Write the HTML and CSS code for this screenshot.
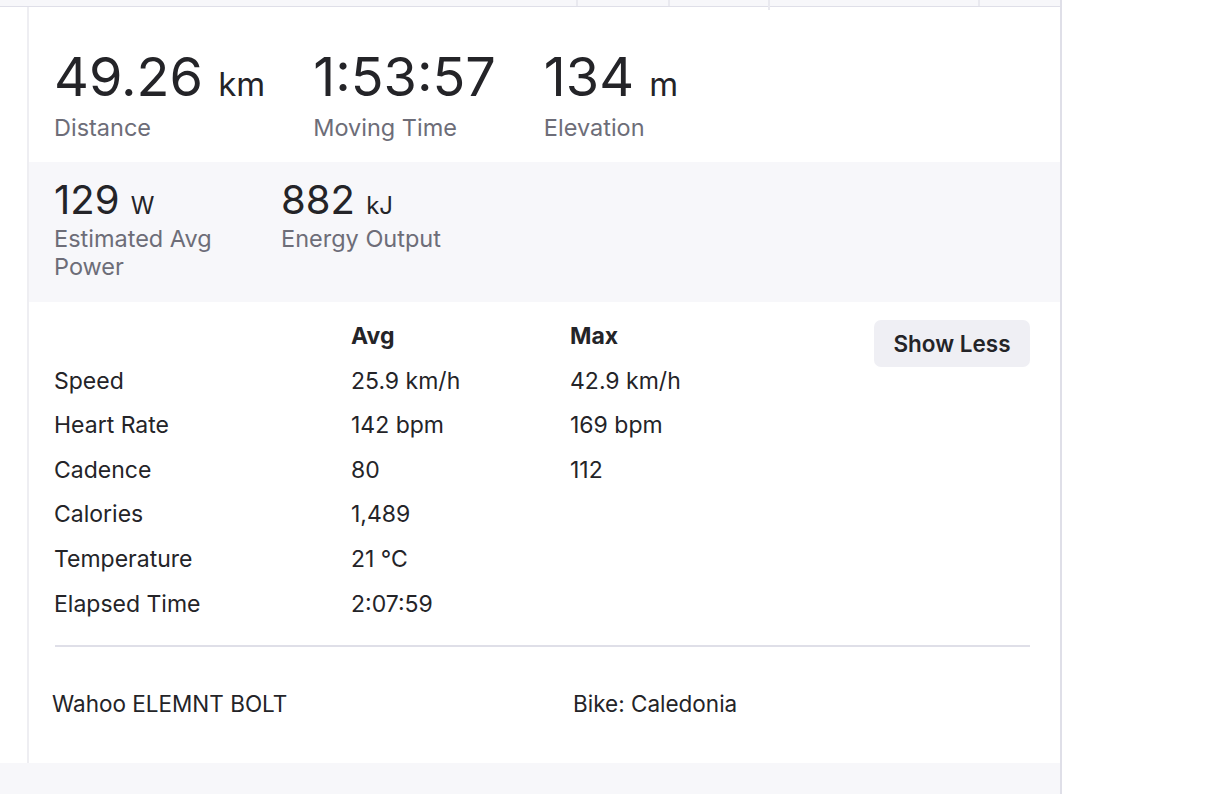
FILE: index.html
```html
<!DOCTYPE html>
<html lang="en">
<head>
<meta charset="utf-8">
<title>Activity stats</title>
<link rel="stylesheet" href="styles.css">
</head>
<body>
<div class="page">
  <div class="topbar">
    <div class="tab tab-a"></div>
    <div class="tab tab-b"></div>
    <div class="tab tab-c"></div>
    <div class="tab tab-d"></div>
    <div class="tab tab-e"></div>
  </div>
  <div class="main">
    <div class="gutter"></div>
    <section class="panel">
      <ul class="stats-primary">
        <li class="stat">
          <div class="big"><span class="num">49.26</span> <abbr class="unit">km</abbr></div>
          <div class="label">Distance</div>
        </li>
        <li class="stat">
          <div class="big"><span class="num">1:53:57</span></div>
          <div class="label">Moving Time</div>
        </li>
        <li class="stat">
          <div class="big"><span class="num">134</span> <abbr class="unit">m</abbr></div>
          <div class="label">Elevation</div>
        </li>
      </ul>
      <ul class="stats-secondary">
        <li class="stat">
          <div class="mid"><span class="num">129</span> <abbr class="unit">W</abbr></div>
          <div class="label">Estimated Avg Power</div>
        </li>
        <li class="stat">
          <div class="mid"><span class="num">882</span> <abbr class="unit">kJ</abbr></div>
          <div class="label">Energy Output</div>
        </li>
      </ul>
      <div class="more">
        <div class="more-table">
          <div class="th"></div><div class="th">Avg</div><div class="th">Max</div>
          <div>Speed</div><div>25.9 km/h</div><div>42.9 km/h</div>
          <div>Heart Rate</div><div>142 bpm</div><div>169 bpm</div>
          <div>Cadence</div><div>80</div><div>112</div>
          <div>Calories</div><div>1,489</div><div></div>
          <div>Temperature</div><div>21 ℃</div><div></div>
          <div>Elapsed Time</div><div>2:07:59</div><div></div>
        </div>
        <button class="btn" type="button">Show Less</button>
      </div>
      <div class="device">
        <div>Wahoo ELEMNT BOLT</div>
        <div>Bike: Caledonia</div>
      </div>
    </section>
  </div>
  <div class="bottom"></div>
</div>
</body>
</html>
```
FILE: styles.css
```css
* { box-sizing: border-box; }
html, body { margin: 0; padding: 0; background: #fff; }
body {
  font-family: "Inter", "Liberation Sans", sans-serif;
  color: #242428;
}
ul { list-style: none; margin: 0; padding: 0; }
abbr { text-decoration: none; }

.page {
  width: 1062px;
  height: 794px;
  border-right: 2px solid #dfdfe8;
  display: flex;
  flex-direction: column;
}

.topbar {
  height: 7px;
  flex: none;
  display: flex;
  background: #f7f7fa;
  border-bottom: 1px solid #dfdfe8;
}
.tab { height: 100%; border-right: 2px solid #e9e9ef; }
.tab-a { width: 578px; }
.tab-b { width: 92px; }
.tab-c { width: 100px; position: relative; }
.tab-c::after {
  content: "";
  position: absolute;
  right: -2px;
  top: 6px;
  width: 2px;
  height: 4px;
  background: #e9e9ef;
}
.tab-d { width: 210px; }
.tab-e { flex: 1; border-right: none; }

.main { flex: 1; display: flex; min-height: 0; }
.gutter { width: 29px; flex: none; border-right: 2px solid #eeeef2; }
.panel { flex: 1; display: flex; flex-direction: column; }

.stats-primary {
  display: flex;
  gap: 48px;
  padding: 43px 25px 20px;
}
.big {
  font-size: 54px;
  line-height: 54px;
  height: 54px;
  white-space: nowrap;
}
.big .unit { font-size: 33px; line-height: 1; }
.label {
  font-size: 23.5px;
  line-height: 28px;
  color: #6d6d78;
}
.stats-primary .label { margin-top: 10px; }

.stats-secondary {
  display: flex;
  gap: 48px;
  background: #f7f7fa;
  padding: 16px 25px 21px;
}
.stats-secondary .stat { width: 179px; }
.mid {
  font-size: 40px;
  line-height: 44px;
  height: 44px;
  white-space: nowrap;
}
.mid .unit { font-size: 24px; line-height: 1; }
.stats-secondary .label { margin-top: 3px; }

.more {
  display: flex;
  justify-content: space-between;
  align-items: flex-start;
  padding: 12px 30px 0 25px;
}
.more-table {
  display: grid;
  grid-template-columns: 297px 219px 200px;
  font-size: 23px;
  line-height: 44.6px;
}
.th { font-weight: 700; }
.btn {
  margin-top: 6px;
  width: 156px;
  height: 47px;
  border: none;
  border-radius: 7px;
  background: #efeff4;
  color: #242428;
  font-family: "Inter", "Liberation Sans", sans-serif;
  font-size: 22.5px;
  font-weight: 600;
}

.device {
  margin: 19px 30px 0 26px;
  border-top: 2px solid #dfdfe8;
  padding: 43px 0 43px;
  display: grid;
  grid-template-columns: 518px 1fr;
  font-size: 22.5px;
  line-height: 28px;
}
.device div:first-child { margin-left: -3px; }

.bottom { height: 31px; flex: none; background: #f7f7fa; }
```
